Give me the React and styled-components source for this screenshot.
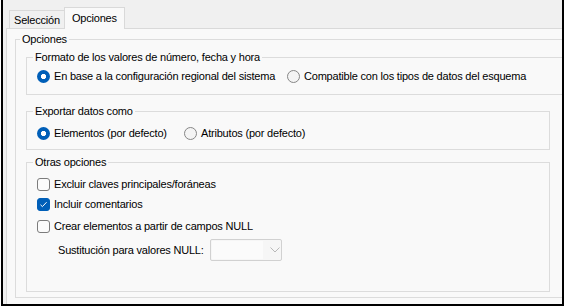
import React from "react";
import styled, { createGlobalStyle } from "styled-components";

const GlobalStyle = createGlobalStyle`
  html, body {
    margin: 0;
    padding: 0;
    background: #ffffff;
  }
  body {
    font-family: "Liberation Sans", Arial, sans-serif;
    font-size: 11px;
    letter-spacing: -0.2px;
    color: #000;
  }
`;

const Frame = styled.div`
  box-sizing: border-box;
  width: 563px;
  height: 306px;
  margin-left: 1px;
  border: 2px solid #000;
  border-top: none;
  background: #f0f0f0;
  overflow: hidden;
  display: flex;
  flex-direction: column;
`;

const TabStrip = styled.div`
  height: 28px;
  flex-shrink: 0;
  display: flex;
  align-items: flex-end;
  padding-left: 6px;
  position: relative;
  z-index: 2;
`;

const Tab = styled.div`
  box-sizing: border-box;
  border: 1px solid #d9d9d9;
  border-bottom: none;
  white-space: nowrap;
  ${(p) =>
    p.$active
      ? `
    height: 22px;
    margin-bottom: -1px;
    padding: 3px 7px 0;
    line-height: 14px;
    background: #f9f9f9;
  `
      : `
    height: 18px;
    padding: 2px 4px 0;
    line-height: 14px;
    border-right: none;
    background: #f0f0f0;
  `}
`;

const Panel = styled.div`
  flex-shrink: 0;
  width: 620px;
  height: 300px;
  margin-left: 3px;
  border: 1px solid #d9d9d9;
  background: #f9f9f9;
  padding: 3px 0 0 8px;
`;

const Group = styled.fieldset`
  margin: ${(p) => p.$gap || 0}px 0 0;
  padding: 0;
  min-width: 0;
  width: ${(p) => p.$width}px;
  box-sizing: border-box;
  border: 1px solid #dcdcdc;
`;

const Legend = styled.legend`
  margin-left: ${(p) => p.$inset ?? 6}px;
  padding: 0 2px;
  line-height: 14px;
  height: 14px;
`;

const GroupBody = styled.div`
  padding: ${(p) => p.$pad};
`;

const Row = styled.div`
  display: flex;
  align-items: center;
  height: ${(p) => p.$h || 16}px;
  margin-top: ${(p) => p.$top || 0}px;
  padding-left: ${(p) => p.$indent || 0}px;
  white-space: nowrap;
`;

const Option = styled.label`
  display: flex;
  align-items: center;
  gap: ${(p) => p.$gap || 4}px;
  width: ${(p) => (p.$width ? `${p.$width}px` : "auto")};
  flex-shrink: 0;
`;

const Radio = styled.span`
  box-sizing: border-box;
  width: 13px;
  height: 13px;
  border-radius: 50%;
  flex-shrink: 0;
  ${(p) =>
    p.$checked
      ? `background: radial-gradient(circle, #ffffff 0 2.4px, #005fb8 2.9px);`
      : `border: 1px solid #868686; background: #f4f4f4;`}
`;

const Box = styled.span`
  box-sizing: border-box;
  width: 13px;
  height: 13px;
  border-radius: 3px;
  flex-shrink: 0;
  display: flex;
  align-items: center;
  justify-content: center;
  border: 1px solid ${(p) => (p.$checked ? "#005fb8" : "#7c7c7c")};
  background: ${(p) => (p.$checked ? "#005fb8" : "#fbfbfb")};
`;

const Combo = styled.div`
  box-sizing: border-box;
  width: 72px;
  height: 22px;
  margin-left: 6px;
  border: 1px solid #d1d1d1;
  border-radius: 2px;
  background: #f6f6f6;
  display: flex;
  align-items: center;
`;

const ComboField = styled.span`
  width: 51px;
  height: 18px;
  margin-left: 1px;
  background: #fbfbfb;
`;

const Chevron = styled.svg`
  margin-left: 7px;
`;

const RadioOption = ({ checked, width, children }) => (
  <Option $width={width}>
    <Radio $checked={checked} />
    <span>{children}</span>
  </Option>
);

const CheckOption = ({ checked, children }) => (
  <Option $gap={4}>
    <Box $checked={checked}>
      {checked && (
        <svg width="9" height="9" viewBox="0 0 9 9">
          <polyline
            points="1.5,4.8 3.4,6.6 7.6,2.2"
            fill="none"
            stroke="#ffffff"
            strokeWidth="1"
          />
        </svg>
      )}
    </Box>
    <span>{children}</span>
  </Option>
);

export default function App() {
  return (
    <>
      <GlobalStyle />
      <Frame>
        <TabStrip>
          <Tab>Selección</Tab>
          <Tab $active>Opciones</Tab>
        </TabStrip>
        <Panel>
          <Group $width={600}>
            <Legend $inset={4}>Opciones</Legend>
            <GroupBody $pad="4px 0 5px 10px">
              <Group $width={560}>
                <Legend>Formato de los valores de número, fecha y hora</Legend>
                <GroupBody $pad="4px 0 10px 10px">
                  <Row>
                    <RadioOption checked width={250}>
                      En base a la configuración regional del sistema
                    </RadioOption>
                    <RadioOption>Compatible con los tipos de datos del esquema</RadioOption>
                  </Row>
                </GroupBody>
              </Group>

              <Group $width={524} $gap={9}>
                <Legend>Exportar datos como</Legend>
                <GroupBody $pad="7px 0 8px 10px">
                  <Row>
                    <RadioOption checked width={147}>
                      Elementos (por defecto)
                    </RadioOption>
                    <RadioOption>Atributos (por defecto)</RadioOption>
                  </Row>
                </GroupBody>
              </Group>

              <Group $width={524} $gap={5}>
                <Legend>Otras opciones</Legend>
                <GroupBody $pad="7px 0 30px 10px">
                  <Row>
                    <CheckOption>Excluir claves principales/foráneas</CheckOption>
                  </Row>
                  <Row $top={4}>
                    <CheckOption checked>Incluir comentarios</CheckOption>
                  </Row>
                  <Row $top={6}>
                    <CheckOption>Crear elementos a partir de campos NULL</CheckOption>
                  </Row>
                  <Row $h={22} $top={5} $indent={21}>
                    <span>Sustitución para valores NULL:</span>
                    <Combo>
                      <ComboField />
                      <Chevron width="10" height="6" viewBox="0 0 10 6">
                        <polyline
                          points="0.5,0.5 5,5 9.5,0.5"
                          fill="none"
                          stroke="#b8b8b8"
                          strokeWidth="1"
                        />
                      </Chevron>
                    </Combo>
                  </Row>
                </GroupBody>
              </Group>
            </GroupBody>
          </Group>
        </Panel>
      </Frame>
    </>
  );
}
